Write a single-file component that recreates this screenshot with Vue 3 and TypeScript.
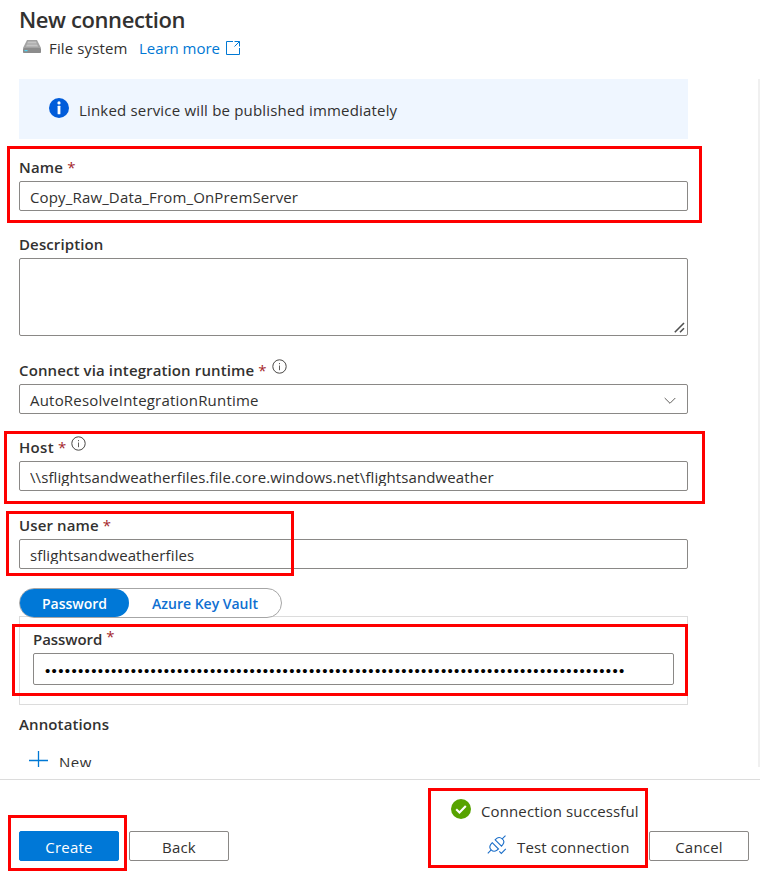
<script setup lang="ts">
const maskedPassword = '•'.repeat(88)

interface Frame {
  name: string
}
const frames: Frame[] = [
  { name: 'name' },
  { name: 'host' },
  { name: 'user' },
  { name: 'password' },
  { name: 'create' },
  { name: 'test' },
]
</script>

<template>
  <div class="page">
    <header class="header">
      <h1 class="title">New connection</h1>
      <div class="subtitle">
        <svg class="drive" width="18" height="13" viewBox="0 0 18 13">
          <path d="M4 0h10l4 8H0z" fill="#a3a3a3" />
          <path d="M5 1.5h8l.8 2H4.2zM3.8 4.5h10.4l.8 2H3z" fill="#c4c4c4" />
          <rect y="8" width="18" height="5" rx=".8" fill="#8c8c8c" />
          <rect x="1.5" y="10" width="3" height="1.2" fill="#50d5f5" />
        </svg>
        <span class="kind">File system</span>
        <a class="learn">Learn more</a>
        <svg class="external" width="14" height="14" viewBox="0 0 14 14" fill="none" stroke="#0078d4">
          <path d="M7 .5H.5v13h13V7M8.5.5h5v5M13.5.5l-5 5" />
        </svg>
      </div>
    </header>

    <main class="scroll">
      <div class="form">
        <div class="banner">
          <svg width="20" height="20" viewBox="0 0 20 20">
            <circle cx="10" cy="10" r="10" fill="#015cda" />
            <circle cx="10" cy="4.9" r="1.6" fill="#fff" />
            <rect x="8.6" y="7.8" width="2.8" height="8.4" rx=".5" fill="#fff" />
          </svg>
          <span>Linked service will be published immediately</span>
        </div>

        <div class="field name-field">
          <label class="label"><span class="label-name">Name</span><i>*</i></label>
          <div class="input"><span class="name-value">Copy_Raw_Data_From_OnPremServer</span></div>
        </div>

        <div class="field">
          <label class="label"><span>Description</span></label>
          <div class="input area">
            <svg width="11" height="11" viewBox="0 0 11 11" stroke="#505050" stroke-width="1.6">
              <path d="M.8 10.2L10 1M6 10.2L10 6.2" />
            </svg>
          </div>
        </div>

        <div class="field runtime-field">
          <label class="label">
            <span>Connect via integration runtime</span><i>*</i>
            <svg class="info" width="15" height="15" viewBox="0 0 15 15">
              <circle cx="7.5" cy="7.5" r="6.7" fill="none" stroke="#484644" />
              <path d="M7.5 6.5v4.7M7.5 4v1.2" stroke="#605e5c" />
            </svg>
          </label>
          <div class="input select">
            <span class="runtime-value">AutoResolveIntegrationRuntime</span>
            <svg width="12" height="8" viewBox="0 0 12 8" fill="none" stroke="#605e5c">
              <path d="M.7 1L6 6.3 11.3 1" />
            </svg>
          </div>
        </div>

        <div class="field host-field">
          <label class="label">
            <span class="label-host">Host</span><i>*</i>
            <svg class="info" width="15" height="15" viewBox="0 0 15 15">
              <circle cx="7.5" cy="7.5" r="6.7" fill="none" stroke="#484644" />
              <path d="M7.5 6.5v4.7M7.5 4v1.2" stroke="#605e5c" />
            </svg>
          </label>
          <div class="input">
            <span class="short">\\sflightsandweatherfiles.file.core.windows.net\flightsandweather</span>
          </div>
        </div>

        <div class="field user-field">
          <label class="label"><span>User name</span><i>*</i></label>
          <div class="input"><span class="short">sflightsandweatherfiles</span></div>
        </div>

        <div class="tabs">
          <button class="tab active">Password</button>
          <button class="tab">Azure Key Vault</button>
        </div>

        <section class="panel">
          <label class="label"><span class="label-password">Password</span><i>*</i></label>
          <div class="input secret"><span>{{ maskedPassword }}</span></div>
        </section>

        <div class="label annotations"><span>Annotations</span></div>
        <div class="add">
          <svg width="19" height="19" viewBox="0 0 19 19" stroke="#0078d4" stroke-width="1.3">
            <path d="M9.5 0v19M0 9.5h19" />
          </svg>
          <span>New</span>
        </div>
      </div>
      <div class="scrollbar"></div>
    </main>

    <footer class="footer">
      <div class="actions">
        <button class="button primary">Create</button>
        <button class="button">Back</button>
      </div>
      <div class="status">
        <div class="result">
          <svg width="20" height="20" viewBox="0 0 20 20">
            <circle cx="10" cy="10" r="10" fill="#57a300" />
            <path d="M5.2 10.2l3.3 3.3 6.3-6.6" fill="none" stroke="#fff" stroke-width="2.1" />
          </svg>
          <span>Connection successful</span>
        </div>
        <div class="test">
          <svg width="20" height="20" viewBox="0 0 20 20" fill="none" stroke="#1b6ec8" stroke-width="1.1">
            <path d="M.8 18.3l3.4-3.4M15.2 3.9L18.5.7" />
            <path d="M5.2 7.7l6.3 6.3-1.7 1.3c-2 1.4-4.2 1-5.6-.4s-1.8-3.6-.4-5.5zM8.2 4.8l6.3 6.3 1.4-1.7c1.4-1.9 1-4.1-.7-5.5-1.5-1.4-3.7-1.8-5.5-.5z" />
            <path d="M12.3 16.4l2 2 4.5-4.6" />
          </svg>
          <span>Test connection</span>
        </div>
      </div>
      <button class="button cancel">Cancel</button>
    </footer>

    <div v-for="frame in frames" :key="frame.name" class="frame" :class="`frame-${frame.name}`"></div>
  </div>
</template>

<style>
body {
  background: #fff;
}
</style>

<style scoped>
.page {
  position: relative;
  display: flex;
  flex-direction: column;
  width: 760px;
  height: 876px;
  overflow: hidden;
  background: #fff;
  color: #323130;
  font: 15px/20px 'Open Sans', 'Noto Sans', sans-serif;
  letter-spacing: 0.18px;
}
.page * {
  box-sizing: border-box;
}
.page svg {
  display: block;
  flex: none;
}
.page span {
  white-space: nowrap;
}
.header {
  flex: none;
  height: 79px;
  padding: 4px 19px 0;
}
.title {
  margin: 0;
  font-size: 22px;
  line-height: 30px;
  font-weight: 600;
  letter-spacing: -0.4px;
}
.subtitle {
  display: flex;
  margin-top: 4px;
  padding-left: 4px;
}
.drive {
  margin-top: 2px;
}
.kind {
  margin-left: 8px;
  width: 90px;
  letter-spacing: 0.14px;
}
.learn {
  width: 87px;
  color: #0078d4;
  letter-spacing: -0.04px;
}
.external {
  margin-top: 3px;
}
.scroll {
  flex: none;
  display: flex;
  justify-content: space-between;
  height: 688px;
  overflow: hidden;
}
.form {
  width: 669px;
  margin-left: 19px;
}
.scrollbar {
  width: 2px;
  background: #f0f0f0;
}
.banner {
  display: flex;
  gap: 10px;
  height: 60px;
  padding: 19px 30px 0;
  margin-bottom: 18px;
  background: #eff6ff;
}
.banner span {
  margin-top: 2px;
}
.field {
  margin-bottom: 23px;
}
.label {
  display: flex;
  height: 24px;
  font-weight: 600;
  letter-spacing: 0.12px;
}
.label i {
  margin-left: 4px;
  font-style: normal;
  font-weight: 400;
  color: #a4262c;
}
.label-name {
  letter-spacing: 0.2px;
}
.label-host {
  letter-spacing: 0.3px;
}
.info {
  margin: -1px 0 0 5px;
}
.input {
  height: 30px;
  padding: 5px 10px 0;
  border: 1px solid #8a8886;
  border-radius: 2px;
}
.name-value {
  letter-spacing: 0.15px;
}
.runtime-value {
  letter-spacing: 0.2px;
}
.short {
  display: block;
  height: 19px;
  overflow: hidden;
  letter-spacing: 0.1px;
}
.area {
  display: flex;
  justify-content: flex-end;
  align-items: flex-end;
  height: 78px;
  padding: 0 2px 2px;
}
.field:nth-child(3) {
  margin-bottom: 24px;
}
.select {
  display: flex;
  justify-content: space-between;
  padding-right: 11px;
}
.select svg {
  margin-top: 7px;
}
.host-field {
  margin-bottom: 24px;
}
.user-field {
  margin-bottom: 19px;
}
.tabs {
  position: relative;
  display: flex;
  width: 263px;
  height: 30px;
  margin-bottom: -2px;
  border: 1px solid #a6a6a6;
  border-radius: 15px;
  background: #fff;
}
.tab {
  flex: 1;
  padding: 1px 0 0;
  border: 0;
  border-radius: 14px;
  background: none;
  color: #0f6fd1;
  font: 600 14px/26px 'Open Sans', 'Noto Sans', sans-serif;
  letter-spacing: 0;
}
.tab.active {
  flex: none;
  width: 109px;
  background: #0078d7;
  color: #fff;
}
.panel {
  height: 89px;
  padding: 12px 13px 0;
  border: 1px solid #dcdcdc;
}
.panel .label i {
  margin-top: -3px;
}
.label-password {
  letter-spacing: -0.05px;
}
.secret {
  height: 32px;
  padding: 7px 10px 0 11px;
  color: #000;
  font-family: 'Liberation Sans', sans-serif;
  letter-spacing: 1.347px;
}
.annotations {
  margin-top: 9px;
}
.add {
  display: flex;
  gap: 11px;
  margin: 13px 0 0 10px;
}
.add span {
  margin-top: 1px;
  letter-spacing: 0.5px;
}
.footer {
  flex: none;
  display: flex;
  height: 97px;
  margin-top: 12px;
  padding-left: 19px;
  border-top: 1px solid #dcdcdc;
}
.actions {
  display: flex;
  gap: 10px;
  margin-top: 51px;
}
.button {
  width: 100px;
  height: 30px;
  padding: 2px 0 0;
  border: 1px solid #8a8886;
  border-radius: 2px;
  background: #fff;
  color: #323130;
  font: 15px/20px 'Open Sans', 'Noto Sans', sans-serif;
  letter-spacing: 0.2px;
}
.primary {
  border-color: #0078d7;
  background: #0078d7;
  color: #fff;
}
.status {
  width: 198px;
  margin: 19px 0 0 222px;
  letter-spacing: 0.12px;
}
.result {
  display: flex;
  gap: 10px;
}
.result span {
  margin-top: 2px;
}
.test {
  display: flex;
  gap: 10px;
  margin: 14px 0 0 36px;
}
.test span {
  margin-top: 2px;
}
.cancel {
  margin-top: 51px;
}
.frame {
  position: absolute;
  border: 3px solid #fe0000;
  pointer-events: none;
}
.frame-name {
  left: 7px;
  top: 146px;
  width: 695px;
  height: 77px;
}
.frame-host {
  left: 4px;
  top: 431px;
  width: 701px;
  height: 73px;
}
.frame-user {
  left: 6px;
  top: 511px;
  width: 288px;
  height: 65px;
}
.frame-password {
  left: 12px;
  top: 624px;
  width: 676px;
  height: 72px;
}
.frame-create {
  left: 8px;
  top: 815px;
  width: 119px;
  height: 56px;
}
.frame-test {
  left: 428px;
  top: 788px;
  width: 220px;
  height: 80px;
}
</style>
